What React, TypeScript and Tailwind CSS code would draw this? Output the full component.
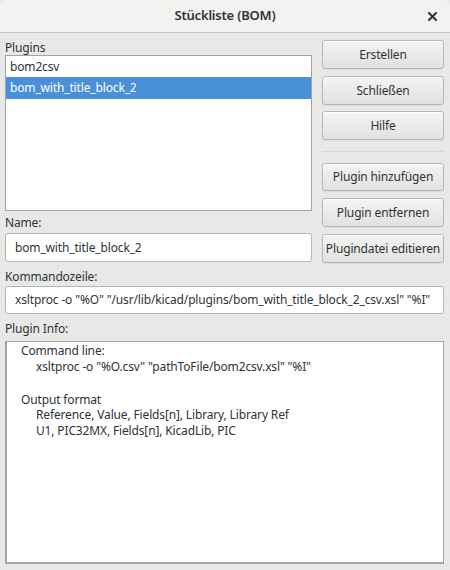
import React from "react";

const btn =
  "w-full flex items-center justify-center rounded-[3px] border border-[#b6b6b3] bg-gradient-to-b from-[#f4f4f3] to-[#e1e1df] text-[#2e3436] shadow-[inset_0_1px_0_#ffffff,0_1px_0_rgba(0,0,0,0.05)]";

export default function App() {
  return (
    <div
      className="w-[450px] h-[570px] bg-[#e8e8e7] flex flex-col text-[12px] tracking-[-0.15px] text-[#2e3436] overflow-hidden"
      style={{ fontFamily: '"Noto Sans", "Open Sans", sans-serif' }}
    >
      {/* Title bar */}
      <div className="h-[33px] shrink-0 relative flex items-center justify-center bg-[#f2f2f1] border-b border-[#c3c3c0] rounded-t-[6px]">
        <span className="text-[13px] font-semibold tracking-[-0.2px] text-[#2e3436]">Stückliste (BOM)</span>
        <svg
          className="absolute right-[13px] top-[12px]"
          width="9"
          height="9"
          viewBox="0 0 9 9"
        >
          <path d="M1 1L8 8M8 1L1 8" stroke="#2e3436" strokeWidth="2" strokeLinecap="square" />
        </svg>
      </div>

      <div className="flex-1 flex flex-col px-[5px] pr-[6px]">
        <div className="flex gap-[10px]">
          {/* Left column */}
          <div className="w-[307px] flex flex-col">
            <div className="h-[22px] flex items-end pb-[1px] leading-none">Plugins</div>
            <div className="h-[156px] bg-white border border-[#a3a3a0] flex flex-col">
              <div className="h-[21px] flex items-center pl-[4px]">bom2csv</div>
              <div className="h-[22px] flex items-center pl-[4px] bg-[#4a90d9] text-white">
                bom_with_title_block_2
              </div>
            </div>
            <div className="h-[22px] flex items-center pt-[2px]">Name:</div>
            <div className="h-[29px] bg-white border border-[#b6b6b3] rounded-[3px] flex items-center pl-[9px]">
              bom_with_title_block_2
            </div>
          </div>

          {/* Right column */}
          <div className="flex-1 flex flex-col pt-[7px]">
            <div className={`${btn} h-[29px]`}>Erstellen</div>
            <div className={`${btn} h-[29px] mt-[7px]`}>Schließen</div>
            <div className={`${btn} h-[29px] mt-[6px]`}>Hilfe</div>
            <div className="h-px bg-[#d6d6d4] mt-[11px]" />
            <div className={`${btn} h-[28px] mt-[11px]`}>Plugin hinzufügen</div>
            <div className={`${btn} h-[29px] mt-[7px]`}>Plugin entfernen</div>
            <div className={`${btn} h-[29px] mt-[7px]`}>Plugindatei editieren</div>
          </div>
        </div>

        <div className="h-[23px] flex items-center pt-[4px]">Kommandozeile:</div>
        <div className="h-[28px] bg-white border border-[#b6b6b3] rounded-[3px] flex items-center pl-[9px] whitespace-nowrap overflow-hidden">
          xsltproc -o "%O" "/usr/lib/kicad/plugins/bom_with_title_block_2_csv.xsl" "%I"
        </div>
        <div className="h-[27px] flex items-center pt-[2px]">Plugin Info:</div>
        <div className="h-[223px] bg-white border border-[#a3a3a0] border-l-2 border-b-2 pl-[14px] pt-[1px] leading-[15.5px]">
          <div>Command line:</div>
          <div className="pl-[15px]">xsltproc -o "%O.csv" "pathToFile/bom2csv.xsl" "%I"</div>
          <div>&nbsp;</div>
          <div className="mt-[2px]">Output format</div>
          <div className="pl-[15px]">Reference, Value, Fields[n], Library, Library Ref</div>
          <div className="pl-[15px]">U1, PIC32MX, Fields[n], KicadLib, PIC</div>
        </div>
      </div>
    </div>
  );
}
